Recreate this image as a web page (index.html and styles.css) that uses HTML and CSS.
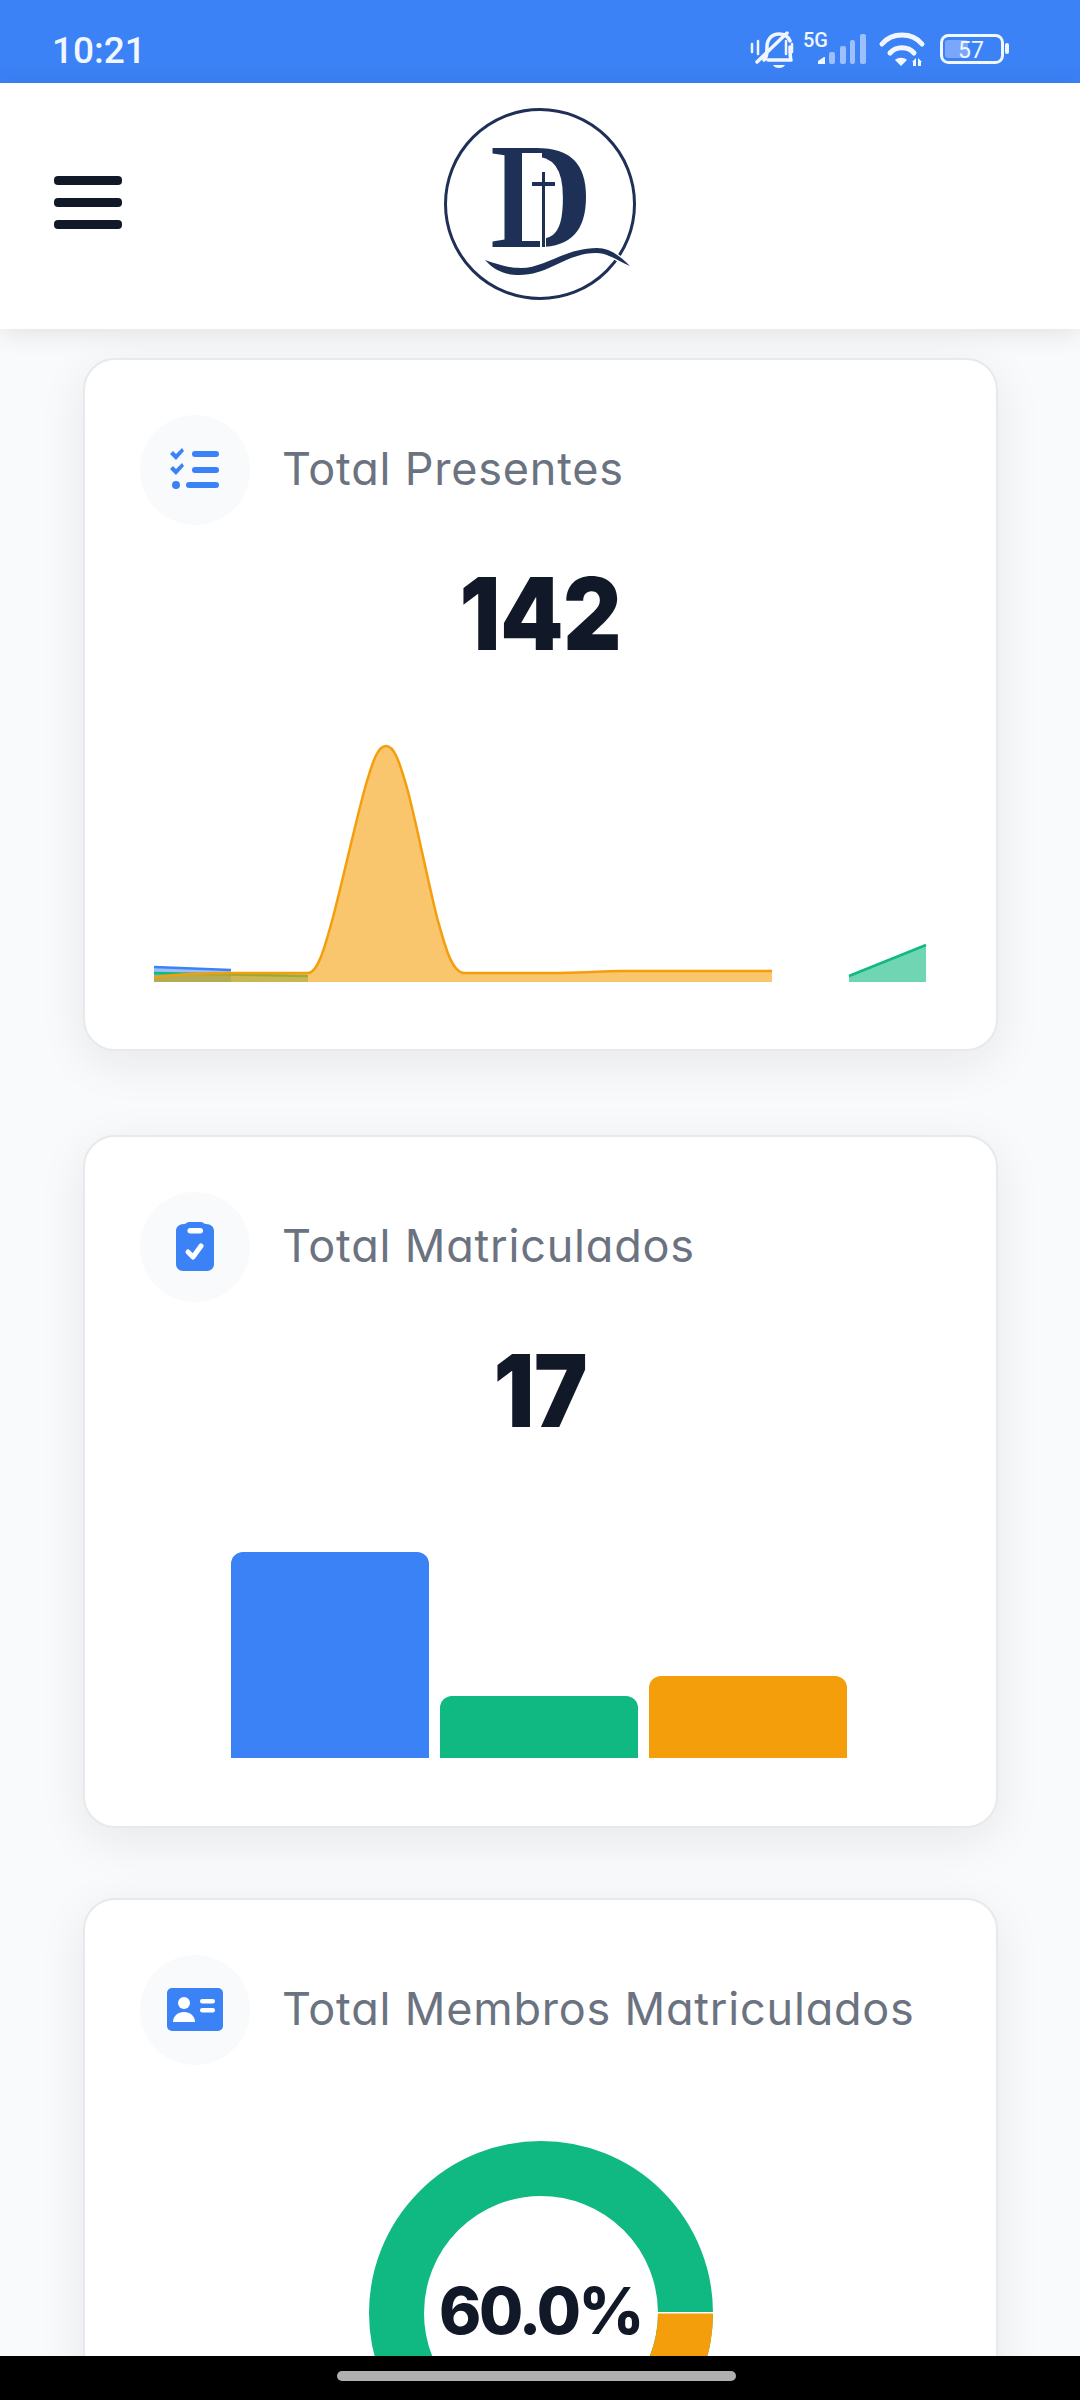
FILE: index.html
```html
<!DOCTYPE html>
<html lang="pt-BR">
<head>
    <meta charset="UTF-8">
    <title>Dashboard</title>
    <link rel="stylesheet" href="styles.css">
</head>
<body>
    <div class="status-bar">
        <span class="status-time">10:21</span>
        <svg class="status-icons" viewBox="750 24 260 52" width="260" height="52">
            <!-- silent bell -->
            <g fill="none" stroke="#f2f6ff" stroke-linecap="round" stroke-linejoin="round">
                <path stroke-width="3.5" d="M764 60c3-3 3-7 3-13 0-8 5-13 12-13 5 0 9 2 11 7M790 47c0 6 0 10 1 13H768"/>
                <path stroke-width="3.5" d="M757 62 787 33"/>
                <path stroke-width="2.5" d="M752 44v8M758 41v13M786 41v13M792 44v8"/>
            </g>
            <path fill="#f2f6ff" d="M773 65h12c-1 2-3 3-6 3s-5-1-6-3z"/>
            <!-- signal -->
            <text class="status-5g" x="803" y="47">5G</text>
            <path fill="#f2f6ff" d="M818 64v-3l6-4h1v7z"/>
            <g fill="#9dbffb">
                <rect x="829" y="52" width="6" height="12" rx="2"/>
                <rect x="840" y="46" width="6" height="18" rx="2"/>
                <rect x="850" y="40" width="5" height="24" rx="2"/>
                <rect x="860" y="34" width="6" height="30" rx="2"/>
            </g>
            <!-- wifi -->
            <g fill="none" stroke="#f2f6ff" stroke-width="5" stroke-linecap="round">
                <path d="M882 44c10-12 30-12 40 0"/>
                <path d="M890 53c6-7 18-7 24 0"/>
            </g>
            <path fill="#f2f6ff" d="M895 60c3-3 9-3 12 0l-6 6z"/>
            <path fill="#f2f6ff" d="M916 58v8h-3v-4l-1 0zM918 58l4 4h-1v4h-3z"/>
            <!-- battery -->
            <rect x="941.5" y="35.5" width="61" height="27" rx="7" fill="none" stroke="#f2f6ff" stroke-width="3"/>
            <rect x="945" y="40" width="23" height="18" rx="3" fill="#7aa7fb"/>
            <rect x="1005" y="43" width="4" height="11" rx="2" fill="#f2f6ff"/>
            <text class="status-battery" x="958" y="58">57</text>
        </svg>
    </div>

    <header class="top-bar">
        <button class="menu-button" aria-label="Menu">
            <span></span>
            <span></span>
            <span></span>
        </button>
        <svg class="logo" viewBox="444 108 192 192" width="192" height="192">
            <circle cx="540" cy="204" r="94.5" fill="none" stroke="#1f3057" stroke-width="3"/>
            <text class="logo-letter" x="490" y="247" textLength="103" lengthAdjust="spacingAndGlyphs">D</text>
            <!-- thin the stem and open the counter around the cross -->
            <rect x="522" y="153" width="20" height="88" fill="#fff"/>
            <rect x="540" y="165" width="6" height="84" fill="#fff"/>
            <rect x="542" y="172" width="3" height="75" fill="#1f3057"/>
            <rect x="532" y="182" width="23" height="4" fill="#1f3057"/>
            <path fill="#1f3057" stroke="#fff" stroke-width="3" paint-order="stroke" d="M485 260c12 4 22 8 36 8 24 0 44-20 76-20 12 0 22 7 33 18-14-6-22-13-34-13-30 0-46 22-77 22-16 0-26-6-34-15z"/>
        </svg>
        <div></div>
    </header>

    <main class="content">
        <section class="card card-presentes">
            <div class="card-head">
                <div class="icon-circle">
                    <svg viewBox="163 438 64 64" width="64" height="64" fill="#3b82f6">
                        <path d="M170 454l3-3 3 3 6-6 2 3-8 9z"/>
                        <path d="M170 469l3-3 3 3 6-6 2 3-8 9z"/>
                        <circle cx="176" cy="485" r="4"/>
                        <rect x="192" y="451" width="27" height="6" rx="3"/>
                        <rect x="192" y="467" width="27" height="6" rx="3"/>
                        <rect x="186" y="482" width="33" height="6" rx="3"/>
                    </svg>
                </div>
                <h2 class="card-title">Total Presentes</h2>
            </div>
            <div class="card-value">142</div>
            <svg class="area-chart" viewBox="154 741 773 240" width="773" height="240">
                <path fill="#3b82f6" fill-opacity=".5" d="M154 966 231 969V981H154z"/>
                <path fill="none" stroke="#3b82f6" stroke-width="2.5" d="M154 966 231 969"/>
                <path fill="#10b981" fill-opacity=".5" d="M154 972 308 975V981H154z"/>
                <path fill="none" stroke="#10b981" stroke-width="2.5" d="M154 972 308 975"/>
                <path fill="#f59e0b" fill-opacity=".6" d="M154 976C180 973 205 972 231 972H308C318 972 325 945 332 920 339 895 357 815 365 787 373 759 378 745 386 745 394 745 399 759 407 787 415 815 431 895 438 920 445 945 452 972 464 972H560C590 972 600 970 620 970H772V981H154z"/>
                <path fill="none" stroke="#f59e0b" stroke-width="2.5" d="M154 976C180 973 205 972 231 972H308C318 972 325 945 332 920 339 895 357 815 365 787 373 759 378 745 386 745 394 745 399 759 407 787 415 815 431 895 438 920 445 945 452 972 464 972H560C590 972 600 970 620 970H772"/>
                <path fill="#10b981" fill-opacity=".6" d="M849 975 926 944V981H849z"/>
                <path fill="none" stroke="#10b981" stroke-width="2.5" d="M849 975 926 944"/>
            </svg>
        </section>

        <section class="card card-matriculados">
            <div class="card-head">
                <div class="icon-circle">
                    <svg viewBox="163 1215 64 64" width="64" height="64">
                        <path fill="#3b82f6" d="M189 1222h12c2 0 3 2 5 2 5 0 8 3 8 7v33c0 4-3 7-7 7h-24c-4 0-7-3-7-7v-33c0-4 3-7 8-7 2 0 3-2 5-2z"/>
                        <rect x="187.5" y="1228" width="15.5" height="5.5" rx="2.7" fill="#fff"/>
                        <path fill="none" stroke="#fff" stroke-width="5" stroke-linecap="round" stroke-linejoin="round" d="M188 1252l5 5 8-11"/>
                    </svg>
                </div>
                <h2 class="card-title">Total Matriculados</h2>
            </div>
            <div class="card-value">17</div>
            <div class="bar-chart">
                <div class="bar bar-blue" style="height: 206px"></div>
                <div class="bar bar-green" style="height: 62px"></div>
                <div class="bar bar-orange" style="height: 82px"></div>
            </div>
        </section>

        <section class="card">
            <div class="card-head">
                <div class="icon-circle">
                    <svg viewBox="163 1978 64 64" width="64" height="64" fill="#3b82f6">
                        <rect x="167" y="1988" width="56" height="43" rx="5"/>
                        <circle cx="184" cy="2003" r="6" fill="#fff"/>
                        <path d="M173 2022c0-6 5-10 11-10s11 4 11 10z" fill="#fff"/>
                        <rect x="200" y="1999" width="15" height="4.5" rx="2.2" fill="#fff"/>
                        <rect x="200" y="2008" width="15" height="4.5" rx="2.2" fill="#fff"/>
                    </svg>
                </div>
                <h2 class="card-title">Total Membros Matriculados</h2>
            </div>
            <div class="donut">
                <svg viewBox="368 2141 344 344" width="344" height="344">
                    <circle cx="540" cy="2313" r="144.5" fill="none" stroke="#10b981" stroke-width="55"/>
                    <path fill="none" stroke="#f59e0b" stroke-width="55" d="M684.5 2313A144.5 144.5 0 0 1 612 2438"/>
                    <rect x="656" y="2312" width="57" height="1.5" fill="#fff"/>
                </svg>
                <div class="donut-label">60.0%</div>
            </div>
        </section>
    </main>

    <div class="nav-bar"><div class="nav-pill"></div></div>
</body>
</html>
```

FILE: styles.css
```css
* {
    box-sizing: border-box;
}
body {
    font-family: Inter, "Noto Sans", sans-serif;
    background-color: #f9fafb;
    color: #111827;
    margin: 0;
    height: 2400px;
    overflow: hidden;
    position: relative;
}
.status-bar {
    background-color: #3b82f6;
    height: 83px;
    display: flex;
    justify-content: space-between;
    align-items: center;
    padding: 0 70px 0 52px;
}
.status-time {
    font-family: Roboto, sans-serif;
    font-size: 37px;
    font-weight: 500;
    color: #f2f6ff;
    margin-top: 17px;
}
.status-icons {
    margin-top: 17px;
}
.status-5g {
    font-family: Roboto, sans-serif;
    font-size: 20px;
    font-weight: 500;
    fill: #f2f6ff;
}
.status-battery {
    font-family: Roboto, sans-serif;
    font-size: 23px;
    fill: #f2f6ff;
}
.top-bar {
    position: relative;
    background: #fff;
    height: 246px;
    display: grid;
    grid-template-columns: 1fr auto 1fr;
    align-items: center;
    padding: 0 54px;
    box-shadow: 0 4px 24px rgba(0, 0, 0, 0.1);
}
.menu-button {
    background: none;
    border: none;
    padding: 0;
    width: 68px;
    margin-bottom: 7px;
    display: flex;
    flex-direction: column;
    gap: 13px;
}
.menu-button span {
    display: block;
    height: 9px;
    background-color: #111827;
    border-radius: 4px;
}
.logo {
    display: block;
    margin-bottom: 4px;
}
.logo-letter {
    font-family: "Liberation Serif", serif;
    font-weight: bold;
    font-size: 151px;
    fill: #1f3057;
}
.content {
    padding: 29px 82px 0 83px;
}
.card {
    background: #fff;
    border: 2px solid #e8e9ec;
    border-radius: 32px;
    padding: 55px 55px 67px;
    box-shadow: 0 12px 48px rgba(17, 24, 39, 0.08);
}
.card-presentes {
    margin-bottom: 84px;
}
.card-matriculados {
    margin-bottom: 70px;
}
.card-head {
    display: flex;
    align-items: center;
    gap: 32px;
}
.icon-circle {
    width: 110px;
    height: 110px;
    flex: none;
    border-radius: 50%;
    background-color: #f9fafb;
    display: flex;
    align-items: center;
    justify-content: center;
}
.card-title {
    margin: 0 0 3px;
    font-size: 45px;
    font-weight: 430;
    letter-spacing: 0.8px;
    color: #6b7280;
    font-feature-settings: "cv11";
}
.card-value {
    font-size: 100px;
    font-weight: 900;
    line-height: 100px;
    text-align: center;
    transform: scaleX(0.9);
    margin: 39px 0 78px;
}
.area-chart {
    display: block;
    margin: 0 auto;
}
.bar-chart {
    height: 240px;
    padding: 0 3px 1px 0;
    display: flex;
    justify-content: center;
    align-items: flex-end;
    gap: 11px;
}
.bar {
    width: 198px;
    border-radius: 12px 12px 0 0;
}
.bar-blue {
    background-color: #3b82f6;
}
.bar-green {
    background-color: #10b981;
}
.bar-orange {
    background-color: #f59e0b;
}
.donut {
    position: relative;
    width: 344px;
    height: 344px;
    margin: 76px auto 0;
}
.donut svg {
    display: block;
}
.donut-label {
    position: absolute;
    left: 50%;
    top: 50%;
    transform: translate(-50%, -52px);
    font-size: 64px;
    font-weight: 800;
    letter-spacing: -2.5px;
    line-height: 100px;
    white-space: nowrap;
}
.nav-bar {
    position: absolute;
    left: 0;
    right: 0;
    bottom: 0;
    height: 44px;
    background-color: #000;
    display: flex;
    justify-content: center;
    align-items: center;
}
.nav-pill {
    width: 399px;
    height: 10px;
    margin-left: -7px;
    margin-top: -4px;
    background-color: #b0b0b0;
    border-radius: 5px;
}
```
